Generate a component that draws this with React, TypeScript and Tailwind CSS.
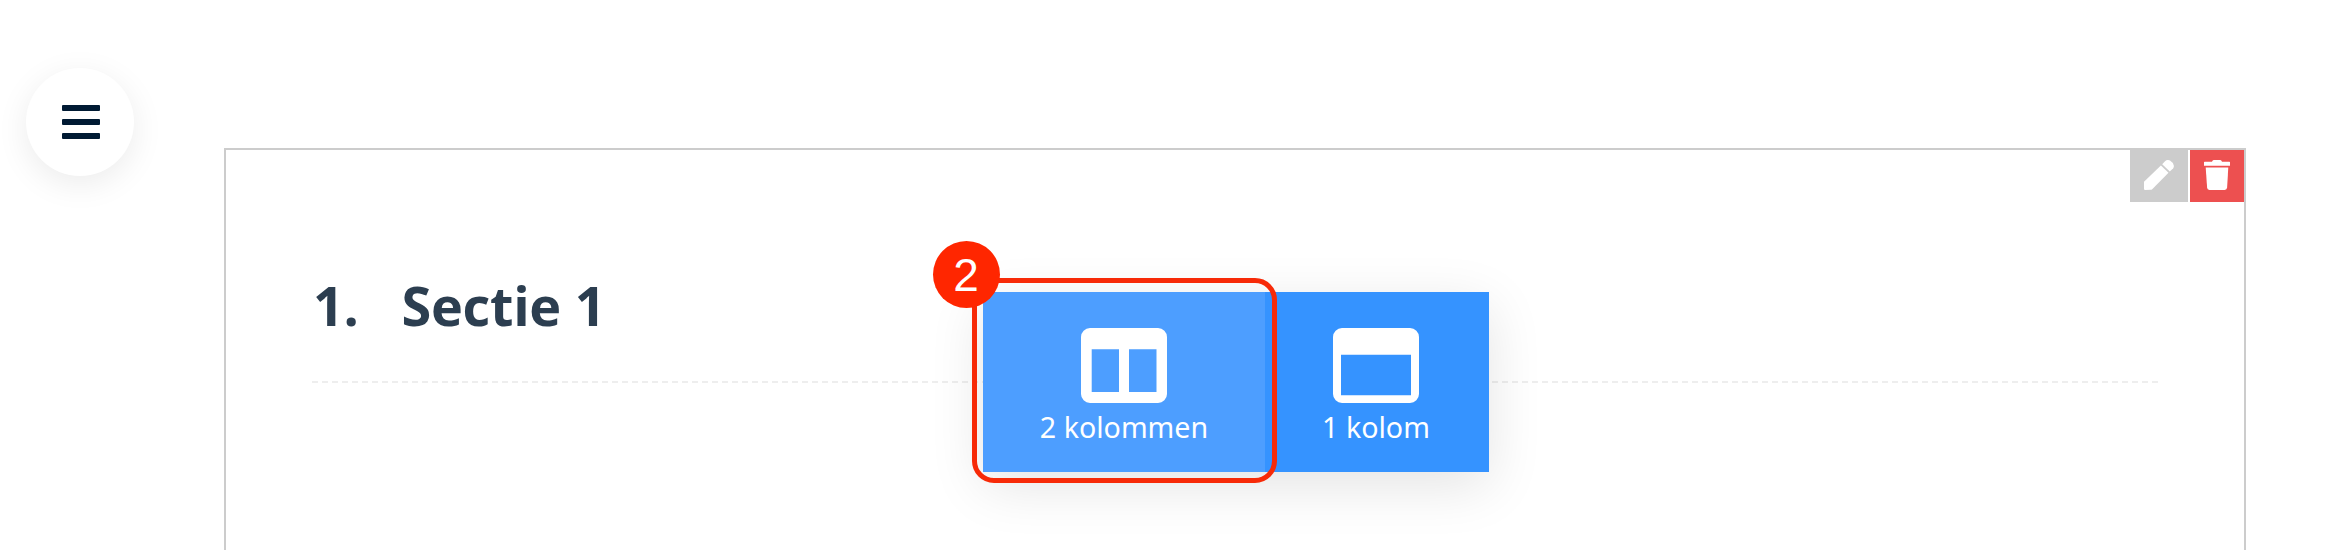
const ColumnsIcon = () => (
  <svg viewBox="0 0 86 75" className="block h-[75px] w-[86px]" fill="#fff">
    <path
      fillRule="evenodd"
      d="M9 0h68a9 9 0 0 1 9 9v57a9 9 0 0 1-9 9H9a9 9 0 0 1-9-9V9a9 9 0 0 1 9-9zM10.700 21.300v42.700h27.300V21.300zM48 21.300v42.700h27.500V21.300z"
    />
  </svg>
);

const WindowIcon = () => (
  <svg viewBox="0 0 86 75" className="block h-[75px] w-[86px]" fill="#fff">
    <path
      fillRule="evenodd"
      d="M9 0h68a9 9 0 0 1 9 9v57a9 9 0 0 1-9 9H9a9 9 0 0 1-9-9V9a9 9 0 0 1 9-9zM8 26.700v40.600h70V26.700z"
    />
  </svg>
);

const PencilIcon = () => (
  <svg viewBox="0 0 30 30" className="block h-[30px] w-[30px]" fill="#fff">
    <path d="M0 21.800L16.900 5.400L24.500 12.800L8.200 29.200Q7.500 29.700 6.700 29.800L1.200 30Q0 30 0 29z" />
    <path d="M18.200 4.200L21.300 0.900Q22.400 -0.100 24.200 0L26 0.600Q28.800 2.200 29.800 5.600Q30 7.300 29.200 8.200L25.800 11.600z" />
  </svg>
);

const TrashIcon = () => (
  <svg viewBox="0 0 26 30" className="block h-[30px] w-[26px]" fill="#fff">
    <path d="M0 2.200Q0 1.700 .6 1.700H8L8.700 .6Q9 0 9.800 0H16.200Q17 0 17.300 .6L18 1.700H25.400Q26 1.700 26 2.200V5.800H0z" />
    <path d="M1.700 7.500H24.300L23.100 27.600Q22.900 30 20.700 30H5.300Q3.300 30 3.100 27.600z" />
  </svg>
);

export default function App() {
  return (
    <div className="flex h-[550px] w-[2326px] items-start overflow-hidden bg-white font-['Open_Sans','Noto_Sans',sans-serif]">
      {/* Menu toggle */}
      <button className="mt-[68px] ml-[26px] flex size-[108px] shrink-0 flex-col items-center justify-center gap-[7.5px] rounded-full bg-white pl-0.5 shadow-[0_8px_32px_rgba(0,0,0,0.08)]">
        <span className="h-[6.500px] w-[38px] rounded-[1px] bg-[#001a33]" />
        <span className="h-[6.500px] w-[38px] rounded-[1px] bg-[#001a33]" />
        <span className="h-[6.500px] w-[38px] rounded-[1px] bg-[#001a33]" />
      </button>

      {/* Section */}
      <section className="relative mt-[148px] ml-[90px] h-[420px] w-[2022px] shrink-0 border-2 border-[#ccc] bg-white">
        <div className="flex h-[52px] justify-end gap-0.5">
          <button className="flex w-[58px] items-start justify-center bg-[#ccc] pt-[10px]">
            <PencilIcon />
          </button>
          <button className="flex w-[54px] items-start justify-center bg-[#ed5050] pt-[10px]">
            <TrashIcon />
          </button>
        </div>

        <div className="mx-[86px] flex h-[181px] border-b-2 border-dashed border-[#eee] pt-[66px] pl-px text-[54px] leading-[74px] font-bold tracking-[-0.3px] text-[#2c3e50]">
          <span className="w-[88.500px]">1.</span>
          <h2>Sectie 1</h2>
        </div>

        {/* Column picker */}
        <div className="absolute top-[142px] left-[757px] flex h-[180px] w-[506px] bg-[#3593ff] font-['Noto_Sans',sans-serif] text-[28.6px] leading-[38px] text-white shadow-[0_14px_52px_rgba(0,0,0,0.11)]">
          <button className="flex w-[282px] flex-col items-center bg-[#4d9eff] pt-9">
            <ColumnsIcon />
            <span className="mt-[5px]">2 kolommen</span>
          </button>
          <button className="flex flex-1 flex-col items-center pt-9 pr-0.5">
            <WindowIcon />
            <span className="mt-[5px]">1 kolom</span>
          </button>
        </div>

        {/* Step marker */}
        <div className="absolute top-[128px] left-[746px] h-[205px] w-[305px] rounded-[22px] border-5 border-[#f72a08]" />
        <div className="absolute top-[91px] left-[707px] flex size-[67px] items-center justify-center rounded-full bg-[#ff2600] pr-px font-['Liberation_Sans',Arial,sans-serif] text-[46px] leading-none text-white">
          2
        </div>
      </section>
    </div>
  );
}
